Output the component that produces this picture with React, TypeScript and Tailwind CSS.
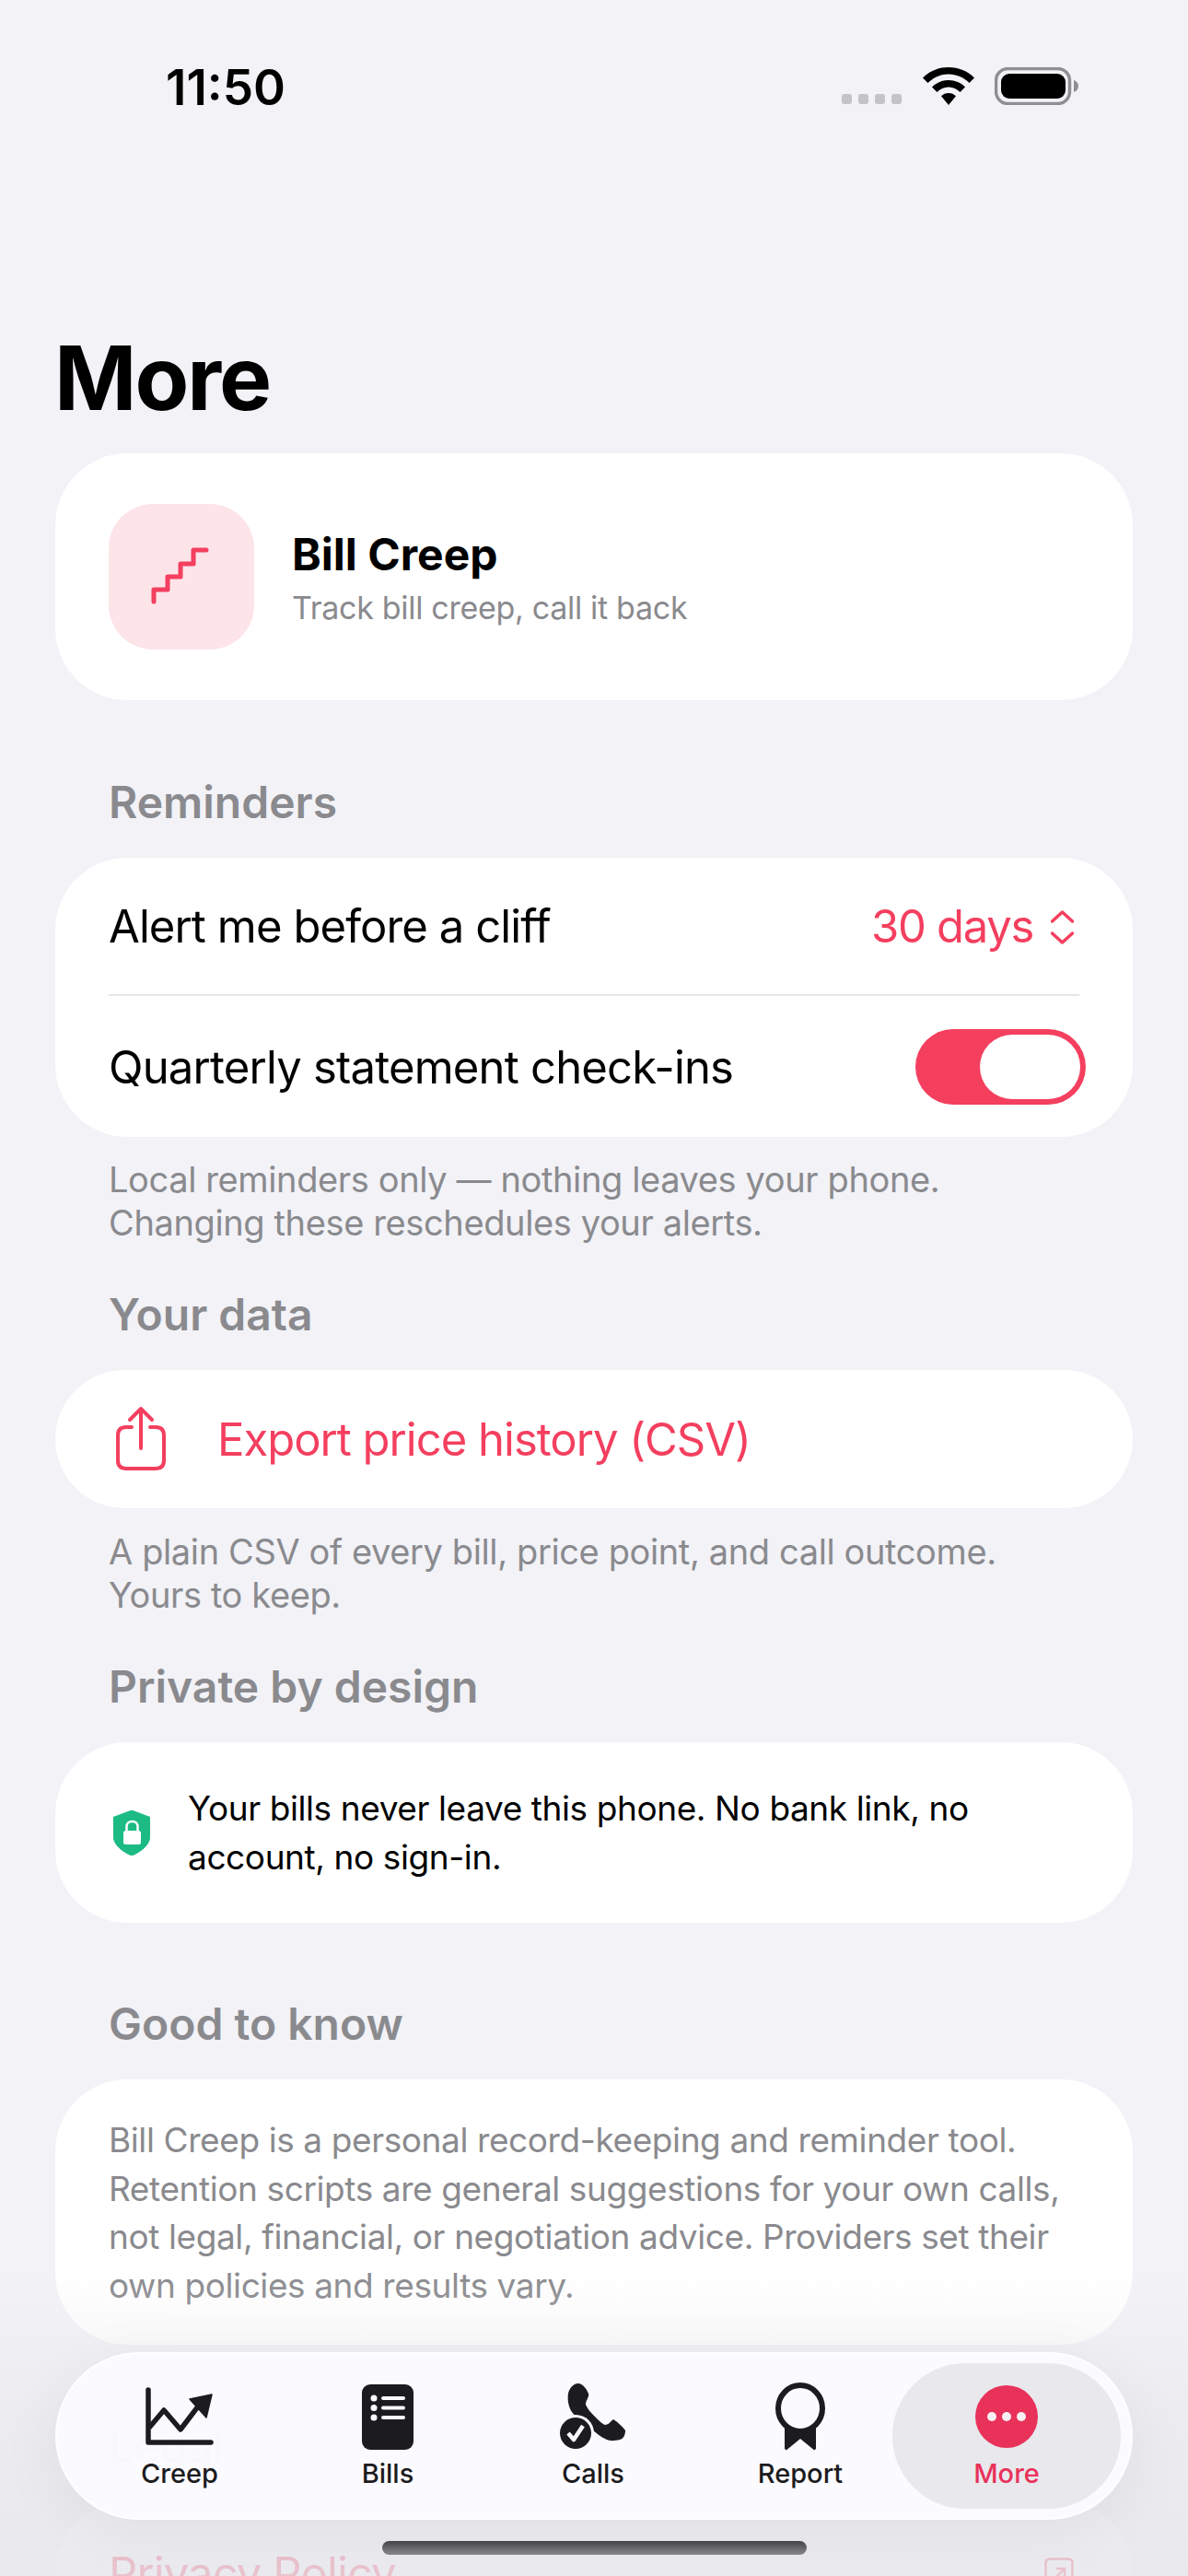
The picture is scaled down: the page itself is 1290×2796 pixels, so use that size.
import React from "react";

const SectionTitle = ({ className, children }: { className: string; children: React.ReactNode }) => (
  <h2 className={`ml-[118px] h-[60px] text-[48px] leading-[60px] font-semibold text-[#8a8a8e] ${className}`}>{children}</h2>
);

const Note = ({ className, children }: { className: string; children: React.ReactNode }) => (
  <p className={`ml-[118px] text-[38px] leading-[47px] tracking-[-0.38px] text-[#8a8a8e] ${className}`}>{children}</p>
);

const TabItem = ({ label, width, children }: { label: string; width: string; children: React.ReactNode }) => (
  <div className={`flex flex-col items-center justify-center ${width}`}>
    <div className="flex h-[76px] items-center justify-center">{children}</div>
    <span className="mt-[6px] text-[29px] leading-[36px] font-medium text-[#1c1c1e]">{label}</span>
  </div>
);

export default function App() {
  return (
    <div className="relative h-[2796px] w-[1290px] overflow-hidden bg-[#f2f2f7] font-['Inter',sans-serif] text-black">
      {/* status bar */}
      <div className="flex h-[350px] items-start justify-between pl-[180px] pr-[119px] pt-[68px]">
        <span className="text-[53px] leading-[54px] font-semibold">11:50</span>
        <div className="flex items-end pt-[5px]">
          <div className="mb-[1px] flex gap-[7px]">
            <span className="h-[11px] w-[11px] rounded-[3px] bg-[#c4c4c8]" />
            <span className="h-[11px] w-[11px] rounded-[3px] bg-[#c4c4c8]" />
            <span className="h-[11px] w-[11px] rounded-[3px] bg-[#c4c4c8]" />
            <span className="h-[11px] w-[11px] rounded-[3px] bg-[#c4c4c8]" />
          </div>
          <svg className="ml-[23px]" width="56" height="41" viewBox="0 0 56 41">
            <path d="M28 0C17 0 7.500 4 0 11.500L5.500 17C11.500 11 19.500 7.500 28 7.500S44.500 11 50.500 17L56 11.500C48.500 4 39 0 28 0Z" fill="#000" />
            <path d="M28 14C21 14 14.500 16.800 10 21.500L15.500 27C18.800 23.700 23.200 21.500 28 21.500S37.200 23.700 40.500 27L46 21.500C41.500 16.800 35 14 28 14Z" fill="#000" />
            <path d="M28 28C25 28 22.200 29.200 20 31.300L28 41L36 31.300C33.800 29.200 31 28 28 28Z" fill="#000" />
          </svg>
          <svg className="ml-[22px]" width="91" height="41" viewBox="0 0 91 41">
            <rect x="1.500" y="1.500" width="80" height="38" rx="13" fill="none" stroke="#8e8e93" strokeWidth="3.500" />
            <rect x="7" y="7" width="70" height="27" rx="9" fill="#000" />
            <path d="M86 14C89 15 91 17.500 91 20.500S89 26 86 27Z" fill="#8e8e93" />
          </svg>
        </div>
      </div>

      <h1 className="ml-[59px] h-[120px] text-[96px] leading-[120px] font-bold tracking-[-2px]">More</h1>

      {/* app card */}
      <section className="mx-[60px] mt-[22px] flex h-[268px] items-center rounded-[78px] bg-white pl-[58px]">
        <div className="flex h-[158px] w-[158px] items-center justify-center rounded-[48px] bg-[#fde4e9]">
          <svg width="158" height="158" viewBox="0 0 158 158" fill="none">
            <path d="M49 106V93H64V79H78V65H92V50H106" stroke="#f43f5f" strokeWidth="5" strokeLinecap="round" strokeLinejoin="round" />
          </svg>
        </div>
        <div className="ml-[41px] pt-[2px]">
          <p className="text-[48px] leading-[60px] font-bold">Bill Creep</p>
          <p className="mt-[6px] text-[34px] leading-[44px] tracking-[-0.3px] text-[#8a8a8e]">Track bill creep, call it back</p>
        </div>
      </section>

      <SectionTitle className="mt-[81px]">Reminders</SectionTitle>
      <section className="mx-[60px] mt-[30px] rounded-[78px] bg-white">
        <div className="mx-[58px] flex h-[150px] items-center justify-between border-b-2 border-[#e6e6e8] pt-[2px]">
          <span className="text-[49px] tracking-[-0.9px]">Alert me before a cliff</span>
          <div className="flex items-center text-[#f43f5f]">
            <span className="text-[49px] tracking-[-1.300px]">30 days</span>
            <svg className="ml-[19px] mr-[6px]" width="25" height="37" viewBox="0 0 25 37" fill="none">
              <path d="M1.500 12L12.500 2L23.500 12M1.500 25L12.500 35L23.500 25" stroke="#f43f5f" strokeWidth="3.500" strokeLinecap="round" strokeLinejoin="round" />
            </svg>
          </div>
        </div>
        <div className="ml-[58px] mr-[51px] flex h-[153px] items-center justify-between">
          <span className="pt-[2px] text-[49px] tracking-[-0.8px]">Quarterly statement check-ins</span>
          <div className="flex h-[82px] w-[185px] items-center justify-end rounded-full bg-[#f43f5f] pr-[6px]">
            <div className="h-[70px] w-[109px] rounded-full bg-white" />
          </div>
        </div>
      </section>
      <Note className="mt-[23px]">
        Local reminders only — nothing leaves your phone.
        <br />
        Changing these reschedules your alerts.
      </Note>

      <SectionTitle className="mt-[46px]">Your data</SectionTitle>
      <section className="mx-[60px] mt-[30px] flex h-[150px] items-center rounded-[78px] bg-white pl-[64px]">
        <svg width="58" height="72" viewBox="0 0 58 72" fill="none">
          <path d="M19 23H13C7 23 4 26 4 32V59C4 65 7 68 13 68H45C51 68 54 65 54 59V32C54 26 51 23 45 23H39" stroke="#f43f5f" strokeWidth="4" strokeLinecap="round" />
          <path d="M29 46V3M17 15L29 3L41 15" stroke="#f43f5f" strokeWidth="4" strokeLinecap="round" strokeLinejoin="round" />
        </svg>
        <span className="ml-[54px] pt-[2px] text-[49px] tracking-[-1px] text-[#f43f5f]">Export price history (CSV)</span>
      </section>
      <Note className="mt-[24px]">
        A plain CSV of every bill, price point, and call outcome.
        <br />
        Yours to keep.
      </Note>

      <SectionTitle className="mt-[46px]">Private by design</SectionTitle>
      <section className="mx-[60px] mt-[30px] flex h-[196px] items-center rounded-[78px] bg-white pl-[63px]">
        <svg width="40" height="49" viewBox="0 0 40 49">
          <path d="M20 0L40 7.500V27C40 37 31 44.500 20 49C9 44.500 0 37 0 27V7.500Z" fill="#1cbb83" stroke="#1cbb83" strokeLinejoin="round" />
          <rect x="11" y="22" width="19" height="15" rx="2.500" fill="#fff" />
          <path d="M14.500 23V17.500C14.500 14 17 12 20.500 12S26.500 14 26.500 17.500V23" fill="none" stroke="#fff" strokeWidth="2.500" />
        </svg>
        <p className="ml-[41px] text-[37px] leading-[53px] tracking-[-0.4px]">
          Your bills never leave this phone. No bank link, no
          <br />
          account, no sign-in.
        </p>
      </section>

      <SectionTitle className="mt-[80px]">Good to know</SectionTitle>
      <section className="mx-[60px] mt-[30px] flex h-[288px] items-center rounded-[78px] bg-white pl-[58px] pt-[2px]">
        <p className="text-[37px] leading-[52.500px] tracking-[-0.4px] text-[#8a8a8e]">
          Bill Creep is a personal record-keeping and reminder tool.
          <br />
          Retention scripts are general suggestions for your own calls,
          <br />
          not legal, financial, or negotiation advice. Providers set their
          <br />
          own policies and results vary.
        </p>
      </section>

      <SectionTitle className="mt-[81px]">Legal</SectionTitle>
      <section className="mx-[60px] mt-[31px] flex h-[150px] items-center justify-between rounded-[78px] bg-white pl-[58px] pr-[64px] pt-[4px]">
        <span className="text-[49px] tracking-[-0.9px] text-[#f43f5f]">Privacy Policy</span>
        <svg width="32" height="36" viewBox="0 0 32 36" fill="none">
          <rect x="1.500" y="1.500" width="29" height="33" rx="4" stroke="#f43f5f" strokeWidth="2.500" />
          <path d="M10 24L22 12M13 12H22V21" stroke="#f43f5f" strokeWidth="2.500" />
        </svg>
      </section>

      {/* scroll fade under the tab bar */}
      <div className="absolute inset-x-0 bottom-0 h-[330px] bg-gradient-to-b from-[#f2f2f7]/0 via-[#e8e8ec]/60 to-[#e6e6eb]/80" />

      {/* tab bar */}
      <nav className="absolute left-[60px] top-[2553px] flex h-[182px] w-[1170px] items-center rounded-[91px] border-2 border-white/70 bg-[#fbfaff]/[0.96] pl-[20px] shadow-[0_14px_70px_rgba(0,0,0,0.06)]">
        <TabItem label="Creep" width="w-[226px]">
          <svg width="74" height="64" viewBox="0 0 74 64" fill="none">
            <path d="M3 3V60H71" stroke="#1c1c1e" strokeWidth="5.500" strokeLinecap="round" strokeLinejoin="round" />
            <path d="M4 44L20 25L38 46L57 21" stroke="#1c1c1e" strokeWidth="5.500" strokeLinejoin="round" />
            <path d="M48 13L72 8L66 33Z" fill="#1c1c1e" stroke="#1c1c1e" strokeWidth="1.500" strokeLinejoin="round" />
          </svg>
        </TabItem>
        <TabItem label="Bills" width="w-[226px]">
          <svg width="56" height="71" viewBox="0 0 56 71">
            <rect width="56" height="71" rx="9" fill="#1c1c1e" />
            <circle cx="13" cy="15" r="3.500" fill="#fbfaff" />
            <circle cx="13" cy="25.500" r="3.500" fill="#fbfaff" />
            <circle cx="13" cy="36" r="3.500" fill="#fbfaff" />
            <rect x="21" y="13" width="26" height="4" rx="2" fill="#fbfaff" />
            <rect x="21" y="23.500" width="26" height="4" rx="2" fill="#fbfaff" />
            <rect x="21" y="34" width="26" height="4" rx="2" fill="#fbfaff" />
          </svg>
        </TabItem>
        <TabItem label="Calls" width="w-[220px]">
          <svg width="72" height="72" viewBox="0 0 72 72">
            <path d="M20 0C24 0 27 4 29 7L31 11C32 15 28 18 28 23C30 28 34 32 38 36C42 40 46 44 49 45C53 45 55 41 58 39C63 42 68 47 71 51C71 56 69 60 65 61C60 62 55 63 51 61C44 58 38 53 33 48C26 42 18 38 13 31C9 25 8 17 9 11C10 6 14 0 20 0Z" fill="#1c1c1e" />
            <circle cx="17" cy="54" r="20" fill="#fbfaff" />
            <circle cx="17" cy="54" r="17" fill="#1c1c1e" />
            <path d="M9 54L15 61L25 46" fill="none" stroke="#fbfaff" strokeWidth="4.500" strokeLinejoin="round" />
          </svg>
        </TabItem>
        <TabItem label="Report" width="w-[230px]">
          <svg width="54" height="74" viewBox="0 0 54 74">
            <path d="M10 44V71C10 73 12 74 13 72.500L27 61L41 72.500C42 74 44 73 44 71V44Z" fill="#1c1c1e" />
            <ellipse cx="27" cy="28" rx="24" ry="25" fill="#fbfaff" stroke="#1c1c1e" strokeWidth="6" />
          </svg>
        </TabItem>
        <div className="ml-[-15px] flex h-[158px] w-[248px] flex-col items-center justify-center rounded-[79px] bg-[#e8e8ed]">
          <div className="flex h-[76px] items-center justify-center">
            <div className="flex h-[68px] w-[68px] items-center justify-center gap-[6px] rounded-full bg-[#e8325a]">
              <span className="h-[10px] w-[10px] rounded-full bg-[#f8f0f3]" />
              <span className="h-[10px] w-[10px] rounded-full bg-[#f8f0f3]" />
              <span className="h-[10px] w-[10px] rounded-full bg-[#f8f0f3]" />
            </div>
          </div>
          <span className="mt-[6px] text-[29px] leading-[36px] font-medium text-[#e8325a]">More</span>
        </div>
      </nav>

      {/* home indicator */}
      <div className="absolute left-[415px] top-[2758px] h-[15px] w-[461px] rounded-full bg-gradient-to-b from-[#444446] to-[#8a8a8c]" />
    </div>
  );
}
